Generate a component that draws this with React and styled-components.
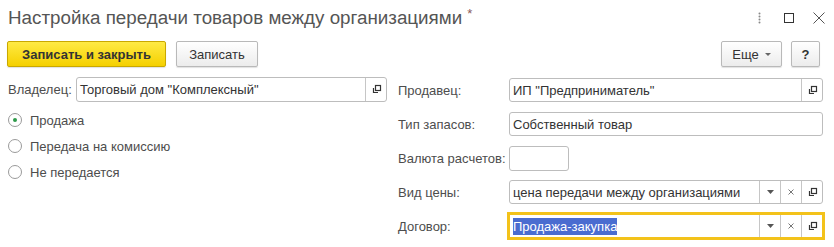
import React from "react";
import styled, { createGlobalStyle } from "styled-components";

const Global = createGlobalStyle`
  html, body { margin: 0; padding: 0; background: #fff; }
  body { font-family: "Liberation Sans", Arial, sans-serif; font-size: 13px; color: #4d4d4d; }
  * { box-sizing: border-box; }
  ::selection { background: #4a6cd0; color: #fff; }
`;

const Page = styled.div`
  width: 834px;
  height: 247px;
  display: flex;
  flex-direction: column;
`;

const TitleBar = styled.div`
  height: 36px;
  display: flex;
  align-items: center;
  padding: 0 0 0 8px;
`;

const Title = styled.div`
  flex: 1;
  font-size: 18.8px;
  color: #555;
  white-space: nowrap;
  padding-bottom: 2px;
`;

const Star = styled.span`
  font-size: 13px;
  color: #8a5a5a;
  vertical-align: 6px;
  margin-left: 5px;
`;

const WinControls = styled.div`
  display: flex;
  align-items: center;
`;

const WinBtn = styled.div`
  width: 30px;
  height: 20px;
  display: flex;
  align-items: center;
  justify-content: center;
`;

const Toolbar = styled.div`
  margin-top: 5px;
  height: 26px;
  display: flex;
  align-items: stretch;
  padding: 0 14px 0 7px;
  gap: 10px;
`;

const Button = styled.button`
  font-family: "Liberation Sans", Arial, sans-serif;
  font-size: 13px;
  height: 26px;
  padding: 0 ${(p) => (p.$px ?? 14)}px;
  border-radius: 2px;
  border: 1px solid ${(p) => (p.$primary ? "#c9a800" : "#b9b9b9")};
  background: ${(p) =>
    p.$primary
      ? "linear-gradient(#ffea44, #f5d000)"
      : "linear-gradient(#ffffff, #ececec)"};
  color: #333;
  font-weight: ${(p) => (p.$bold ? "bold" : "normal")};
  display: flex;
  align-items: center;
  justify-content: center;
  gap: 6px;
  width: ${(p) => p.$w}px;
  box-shadow: 0 1px 1px rgba(0,0,0,0.12);
  cursor: pointer;
`;

const Spacer = styled.div`
  flex: 1;
`;

const RightGroup = styled.div`
  display: flex;
  gap: 9px;
`;

const Caret = styled.span`
  width: 0;
  height: 0;
  border-left: 3px solid transparent;
  border-right: 3px solid transparent;
  border-top: 3px solid #666;
  margin-top: 1px;
`;

const Form = styled.div`
  margin-top: 10px;
  display: flex;
  padding: 0 11px 0 8px;
`;

const LeftCol = styled.div`
  width: 379px;
  display: flex;
  flex-direction: column;
`;

const RightCol = styled.div`
  margin-left: 11px;
  flex: 1;
  display: grid;
  grid-template-columns: 111px 1fr;
  grid-auto-rows: 24px;
  row-gap: 10px;
  margin-top: 1px;
  align-items: center;
`;

const InlineRow = styled.div`
  display: flex;
  align-items: center;
  height: 25px;
`;

const Label = styled.div`
  color: #4d4d4d;
  white-space: nowrap;
  flex-shrink: 0;
  width: ${(p) => (p.$w ? p.$w + "px" : "auto")};
`;

const Field = styled.div`
  height: ${(p) => p.$h || 24}px;
  width: ${(p) => (p.$w ? p.$w + "px" : "100%")};
  border: 1px solid ${(p) => (p.$focus ? "#f3c21a" : "#bdbdbd")};
  ${(p) => p.$focus && "outline: 2px solid #f3c21a; outline-offset: 0px;"}
  border-radius: ${(p) => (p.$focus ? 0 : 3)}px;
  background: #fff;
  display: flex;
  align-items: stretch;
  margin-right: ${(p) => p.$mr || 0}px;
`;

const FieldText = styled.div`
  flex: 1;
  padding: 0 3px;
  color: #333;
  display: flex;
  align-items: center;
  white-space: nowrap;
  overflow: hidden;
  font-size: 13px;
`;

const Selected = styled.span`
  background: #4a6cd0;
  color: #fff;
  padding: 1px 0;
`;

const Seg = styled.div`
  width: 21px;
  border-left: 1px solid #c6c6c6;
  display: flex;
  align-items: center;
  justify-content: center;
  flex-shrink: 0;
`;

const Radios = styled.div`
  margin-top: 5px;
  display: flex;
  flex-direction: column;
`;

const RadioRow = styled.label`
  height: 26px;
  display: flex;
  align-items: center;
  gap: 8px;
  color: #4d4d4d;
`;

const RadioCircle = styled.span`
  width: 14px;
  height: 14px;
  border-radius: 50%;
  border: 1px solid #9a9a9a;
  background: #fff;
  display: flex;
  align-items: center;
  justify-content: center;
  &::after {
    content: "";
    width: 4px;
    height: 4px;
    border-radius: 50%;
    background: ${(p) => (p.$on ? "#2e9a4a" : "transparent")};
  }
`;

const CopyIcon = () => (
  <svg width="11" height="11" viewBox="0 0 11 11">
    <rect x="4.5" y="1.5" width="5" height="5" fill="none" stroke="#333" strokeWidth="1.2" />
    <path d="M2.5 4 V8.5 H7" fill="none" stroke="#333" strokeWidth="1.2" />
  </svg>
);

const ClearIcon = () => (
  <svg width="8" height="8" viewBox="0 0 8 8">
    <path d="M1.5 1.5 L6.5 6.5 M6.5 1.5 L1.5 6.5" stroke="#777" strokeWidth="1" />
  </svg>
);

const DropIcon = () => (
  <svg width="7" height="4" viewBox="0 0 7 4">
    <path d="M0 0 H7 L3.5 4 Z" fill="#555" />
  </svg>
);

const Copy = () => (
  <Seg>
    <CopyIcon />
  </Seg>
);

export default function App() {
  return (
    <Page>
      <Global />
      <TitleBar>
        <Title>
          Настройка передачи товаров между организациями<Star>*</Star>
        </Title>
        <WinControls>
          <WinBtn>
            <svg width="3" height="12" viewBox="0 0 3 12">
              <circle cx="1.5" cy="1.5" r="1" fill="#888" />
              <circle cx="1.5" cy="4.5" r="1" fill="#888" />
              <circle cx="1.5" cy="7.5" r="1" fill="#888" />
              <circle cx="1.5" cy="10.5" r="1" fill="#888" />
            </svg>
          </WinBtn>
          <WinBtn>
            <svg width="10" height="10" viewBox="0 0 10 10">
              <rect x="0.5" y="0.5" width="9" height="9" fill="none" stroke="#333" />
            </svg>
          </WinBtn>
          <WinBtn>
            <svg width="12" height="12" viewBox="0 0 12 12">
              <path d="M0.5 0.5 L11.5 11.5 M11.5 0.5 L0.5 11.5" stroke="#555" strokeWidth="1" />
            </svg>
          </WinBtn>
        </WinControls>
      </TitleBar>

      <Toolbar>
        <Button $primary $bold $w={159}>Записать и закрыть</Button>
        <Button $w={82}>Записать</Button>
        <Spacer />
        <RightGroup>
          <Button $w={61}>
            Еще <Caret />
          </Button>
          <Button $w={29} $px={0} $bold>?</Button>
        </RightGroup>
      </Toolbar>

      <Form>
        <LeftCol>
          <InlineRow>
            <Label $w={68}>Владелец:</Label>
            <Field $h={25}>
              <FieldText>Торговый дом "Комплексный"</FieldText>
              <Copy />
            </Field>
          </InlineRow>
          <Radios>
            <RadioRow>
              <RadioCircle $on />
              Продажа
            </RadioRow>
            <RadioRow>
              <RadioCircle />
              Передача на комиссию
            </RadioRow>
            <RadioRow>
              <RadioCircle />
              Не передается
            </RadioRow>
          </Radios>
        </LeftCol>

        <RightCol>
          <Label>Продавец:</Label>
          <Field>
            <FieldText>ИП "Предприниматель"</FieldText>
            <Copy />
          </Field>

          <Label>Тип запасов:</Label>
          <Field $mr={22}>
            <FieldText>Собственный товар</FieldText>
          </Field>

          <Label>Валюта расчетов:</Label>
          <Field $w={60} $h={25}>
            <FieldText />
          </Field>

          <Label>Вид цены:</Label>
          <Field>
            <FieldText>цена передачи между организациями</FieldText>
            <Seg><DropIcon /></Seg>
            <Seg><ClearIcon /></Seg>
            <Copy />
          </Field>

          <Label>Договор:</Label>
          <Field $focus>
            <FieldText>
              <Selected>Продажа-закупка</Selected>
            </FieldText>
            <Seg><DropIcon /></Seg>
            <Seg><ClearIcon /></Seg>
            <Copy />
          </Field>
        </RightCol>
      </Form>
    </Page>
  );
}
